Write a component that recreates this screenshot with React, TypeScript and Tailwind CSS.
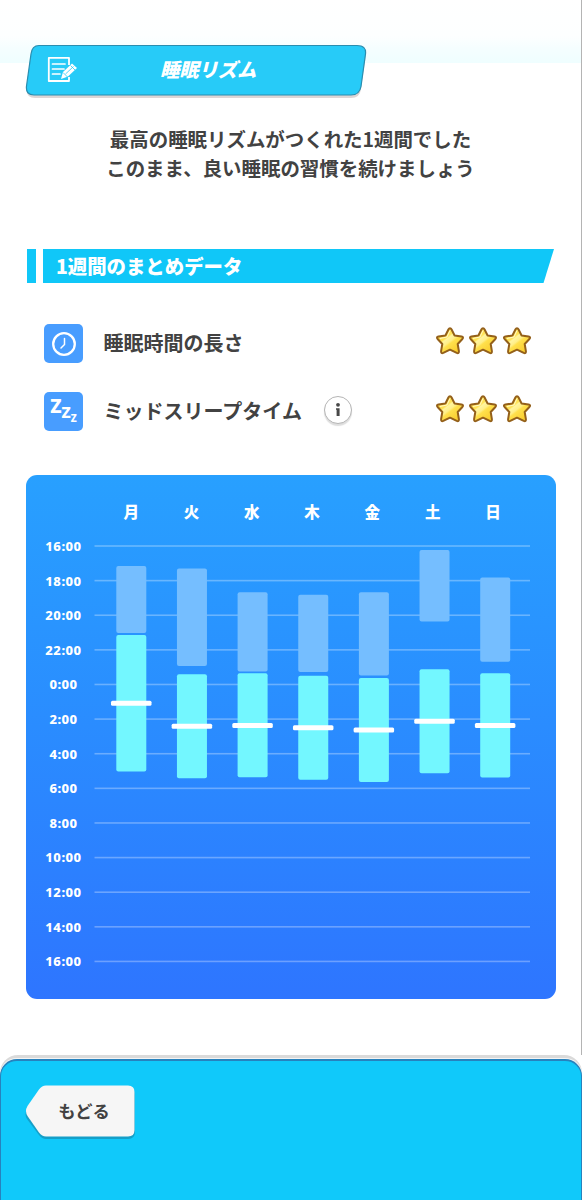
/**
 * @file App.tsx
 * @description Weekly sleep rhythm report: summary ratings and a sleep time chart.
 */

import type { ReactNode } from 'react';

interface DaySleep {
  label: string;
  /** Target range, chart pixels from the top of the plot. */
  target: [number, number];
  /** Actual sleep range, chart pixels from the top of the plot. */
  sleep: [number, number];
  /** Mid-sleep marker. */
  mid: number;
}

const DAYS: DaySleep[] = [
  { label: '月', target: [26.3, 93.5], sleep: [95.5, 232], mid: 163.7 },
  { label: '火', target: [29, 126.3], sleep: [134.6, 238.7], mid: 186.7 },
  { label: '水', target: [52.7, 131.8], sleep: [133.6, 237.7], mid: 185.9 },
  { label: '木', target: [55.1, 132.3], sleep: [136.1, 240.1], mid: 188.1 },
  { label: '金', target: [52.7, 135.9], sleep: [138.3, 242.3], mid: 190.3 },
  { label: '土', target: [10.3, 81.9], sleep: [129.7, 233.7], mid: 181.7 },
  { label: '日', target: [37.9, 122.1], sleep: [133.7, 237.9], mid: 185.9 },
];

const HOURS = [
  '16:00', '18:00', '20:00', '22:00', '0:00', '2:00', '4:00',
  '6:00', '8:00', '10:00', '12:00', '14:00', '16:00',
];

const ROW_HEIGHT = 34.62;
const COLUMN_STEP = 60.65;

function TitleBanner() {
  return (
    <header className="relative ml-[24px] mt-[43px] flex h-[56px] w-[344px] items-start">
      <svg className="absolute inset-0" width="344" height="56" viewBox="0 0 344 56" fill="none">
        <path
          d="M14 6H333Q342 6 341.500 15L337 46Q336 55 327 55H11Q2 55 3 46L7 14Q8 6 14 6Z"
          fill="#ddd6d6"
        />
        <path
          d="M15 2.500H333Q342.500 2.500 341.500 11L337 43.500Q335.500 52 327 52H10Q1.500 52 2.500 43L7 11Q8 2.500 15 2.500Z"
          fill="#27cbf8"
          stroke="#2a8daf"
          strokeWidth="1.200"
        />
      </svg>
      <svg className="relative ml-[23px] mt-[13px]" width="32" height="27" viewBox="0 0 32 27" fill="none">
        <path d="M22 9V1.800H1.800V25H22V21" stroke="#fff" strokeWidth="1.800" strokeLinejoin="round" />
        <path d="M5.500 8H18M5.500 13H17M5.500 18H13" stroke="#fff" strokeWidth="1.700" strokeLinecap="round" />
        <path d="M14 23L16 16L25 7.500L30 12L21 20.500Z" fill="#fff" />
        <path d="M18.500 18L26.500 10.500M16 16.500L20.500 21M23.500 9.500L28 14" stroke="#27cbf8" strokeWidth="0.800" />
      </svg>
      <h1 className="relative ml-[81px] mt-[12px] text-[19.3px] font-black italic leading-[28px] text-white">
        睡眠リズム
      </h1>
    </header>
  );
}

function SectionHeading({ children }: { children: ReactNode }) {
  return (
    <div className="ml-[27px] mt-[67px] flex h-[34px] gap-[7px]">
      <span className="w-[8.5px] bg-[#10c7f8]" />
      <h2 className="w-[511.500px] bg-[#10c7f8] pl-[13.5px] text-[19.4px] font-black leading-[34px] text-white [clip-path:polygon(0_0,100%_0,501px_100%,0_100%)]">
        {children}
      </h2>
    </div>
  );
}

function Star() {
  return (
    <svg width="30" height="30" viewBox="0 0 30 30">
      <defs>
        <linearGradient id="starFill" x1="0.2" y1="0.1" x2="0.85" y2="0.9">
          <stop offset="0" stopColor="#ffdc45" />
          <stop offset="0.3" stopColor="#ffe458" />
          <stop offset="0.36" stopColor="#fff4a0" />
          <stop offset="0.5" stopColor="#ffef88" />
          <stop offset="0.58" stopColor="#ffe04c" />
          <stop offset="1" stopColor="#f9cb2c" />
        </linearGradient>
      </defs>
      <path
        d="M15 2.300Q16 2.300 16.600 3.500L19.600 9.500L26.500 10.500Q29 11 27.400 13L22.700 18L23.900 25.200Q24 27.800 21.700 26.900L15 23.700L8.300 26.900Q6 27.800 6.100 25.200L7.300 18L2.600 13Q1 11 3.500 10.500L10.400 9.500L13.400 3.500Q14 2.300 15 2.300Z"
        fill="url(#starFill)"
        stroke="#94601a"
        strokeWidth="2"
        strokeLinejoin="round"
      />
      <path d="M15 4.500L12 11L5 12.500" stroke="#fff9c9" strokeWidth="1" fill="none" />
    </svg>
  );
}

interface RatingRowProps {
  icon: ReactNode;
  label: string;
  info?: boolean;
}

function RatingRow({ icon, label, info = false }: RatingRowProps) {
  return (
    <div className="flex h-[39px] items-center">
      <span className="flex size-[39px] items-center justify-center rounded-[5px] bg-[#489dff]">
        {icon}
      </span>
      <span className="-mt-px ml-[20.5px] text-[20px] font-bold leading-[30px] text-[#424242]">{label}</span>
      {info && (
        <button
          aria-label="info"
          className="-mt-[4px] ml-[22px] flex size-[28px] items-center justify-center rounded-full border-[1.5px] border-[#b5b5b5] bg-white shadow-[0_2px_1px_#dedede]"
        >
          <svg width="8" height="16" viewBox="0 0 8 16" fill="#484848">
            <circle cx="4" cy="2.800" r="1.900" />
            <path d="M2 6.200H5.600V14H2.600V7.800H2Z" />
          </svg>
        </button>
      )}
      <span className="-mt-[5px] ml-auto mr-[0.5px] flex gap-[3.300px]">
        <Star />
        <Star />
        <Star />
      </span>
    </div>
  );
}

function ClockIcon() {
  return (
    <svg width="26" height="26" viewBox="0 0 26 26" fill="none" stroke="#fff" strokeLinecap="round">
      <circle cx="13" cy="13" r="10.800" strokeWidth="2.300" />
      <path d="M13.500 7.500V13.500L10 17" strokeWidth="1.500" />
    </svg>
  );
}

function ZzzIcon() {
  return (
    <span className="flex h-[30px] items-start font-['Noto_Sans','Open_Sans',sans-serif] font-extrabold leading-none text-white">
      <span className="text-[19px]">Z</span>
      <span className="mt-[8px] text-[15.5px]">Z</span>
      <span className="mt-[16px] text-[10px]">Z</span>
    </span>
  );
}

function SleepChart() {
  return (
    <section className="ml-[26px] mt-[44px] h-[524px] w-[530px] rounded-[11px] bg-gradient-to-b from-[#28a0ff] to-[#2e75ff] pt-[24px] text-white">
      <div className="ml-[75px] flex">
        {DAYS.map((day) => (
          <span key={day.label} className="w-[60.300px] text-center text-[15.5px] font-black leading-[24px]">
            {day.label}
          </span>
        ))}
      </div>
      <div className="mt-[6px] flex">
        <div className="w-[68px] pl-[7px] font-['Noto_Sans','Open_Sans',sans-serif] text-[13px] font-extrabold tracking-[0.5px]">
          {HOURS.map((hour, i) => (
            <div key={i} className="h-[34.620px] text-center leading-[34.620px]">
              {hour}
            </div>
          ))}
        </div>
        <svg className="mt-[16px]" width="440" height="420" viewBox="0 -1 440 420">
          {HOURS.map((_, i) => (
            <rect key={i} x="0.500" y={i * ROW_HEIGHT - 0.8} width="435.500" height="1.600" fill="#fff" fillOpacity="0.300" />
          ))}
          {DAYS.map((day, i) => {
            const x = 22.3 + i * COLUMN_STEP;
            return (
              <g key={day.label}>
                <rect x={x} y={day.target[0] - 6.4} width="30" height={day.target[1] - day.target[0]} rx="2" fill="#75beff" />
                <rect x={x} y={day.sleep[0] - 6.4} width="30" height={day.sleep[1] - day.sleep[0]} rx="2" fill="#73f7ff" />
                <rect x={x - 5.3} y={day.mid - 8.9} width="40.500" height="5" rx="1.500" fill="#fff" />
              </g>
            );
          })}
        </svg>
      </div>
    </section>
  );
}

function BackButton() {
  return (
    <button className="relative ml-[24px] mt-[24px] block h-[54px] w-[110px] text-[17.3px] font-bold text-[#424242]">
      <svg className="absolute inset-0" width="110" height="54" viewBox="0 0 110 54">
        <path
          d="M21 3H103Q110 3 110 10V47Q110 54 103 54H21Q17 54 14 50L2 34Q-1 29 2 25L13 7Q16 3 21 3Z"
          fill="#159fc8"
        />
        <path
          d="M21 0.500H103Q109.500 0.500 109.500 7V45Q109.500 51.500 103 51.500H21Q17 51.500 14 47.500L2.500 31Q-0.500 26 2.500 21L14 4.500Q17 0.500 21 0.500Z"
          fill="#f6f6f6"
        />
      </svg>
      <span className="relative -mt-[3px] block pl-[8px] leading-[51px]">もどる</span>
    </button>
  );
}

export default function App() {
  return (
    <main className="flex h-[1200px] w-[582px] flex-col overflow-hidden bg-white font-['Noto_Sans_CJK_JP',sans-serif]">
      <div className="flex h-[1055px] shrink-0 flex-col border-r border-[#b4b4b4] bg-[linear-gradient(to_bottom,#fff_0px,#fdffff_36px,#f5feff_48px,#effeff_63px,#fff_63px)]">
        <TitleBanner />
        <p className="mt-[25px] text-center text-[19.45px] font-bold leading-[29px] text-[#424242]">
          最高の睡眠リズムがつくれた1週間でした
          <br />
          このまま、良い睡眠の習慣を続けましょう
        </p>
        <SectionHeading>1週間のまとめデータ</SectionHeading>
        <div className="ml-[44px] mr-[49px] mt-[41px] flex flex-col gap-[29px]">
          <RatingRow icon={<ClockIcon />} label="睡眠時間の長さ" />
          <RatingRow icon={<ZzzIcon />} label="ミッドスリープタイム" info />
        </div>
        <SleepChart />
      </div>
      <footer className="h-[145px] shrink-0 rounded-t-[18px] bg-[#dadada] pt-[4px]">
        <div className="h-full rounded-t-[17px] border-x border-t-2 border-[#2782bd] bg-[#10c9fa] shadow-[0_-0.5px_0_0.5px_#f4f4f4]">
          <BackButton />
        </div>
      </footer>
    </main>
  );
}
